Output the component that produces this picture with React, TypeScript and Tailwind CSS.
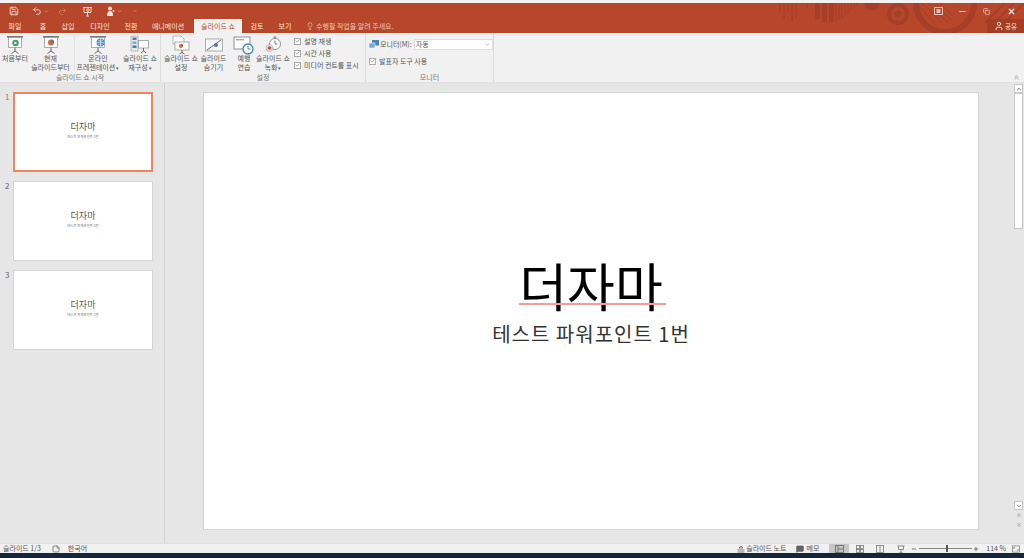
import React from "react";
import { Save, Undo2, Redo2, Lightbulb, User, Minus, X, Copy, Check, ChevronUp, ChevronDown, ChevronsUp, ChevronsDown, StickyNote, MessageSquare, Plus } from "lucide-react";

const font = { fontFamily: '"Noto Sans CJK KR", "Noto Sans", sans-serif' };

function Board({ children }: { children?: React.ReactNode }) {
  return (
    <svg width="20" height="20" viewBox="0 0 20 20" fill="none">
      <rect x="2" y="1" width="16" height="1.6" fill="#7a7a7a" />
      <rect x="3.5" y="2.6" width="13" height="10" fill="#fff" stroke="#8c8c8c" strokeWidth="0.7" />
      <path d="M10 12.6v3.4M6.5 18.5l3.5-2.5 3.5 2.5" stroke="#666" strokeWidth="1" />
      {children}
    </svg>
  );
}

const IconStart = () => (
  <Board>
    <circle cx="10.5" cy="8" r="3.2" fill="#3f9e6a" />
    <path d="M9.5 6.4l2.6 1.6-2.6 1.6z" fill="#fff" />
  </Board>
);
const IconCurrent = () => (
  <Board>
    <circle cx="10" cy="7.5" r="3" fill="#d9663c" />
    <path d="M10 7.5V4.5a3 3 0 0 1 3 3z" fill="#3c78b5" />
  </Board>
);
const IconOnline = () => (
  <Board>
    <circle cx="12.5" cy="7.5" r="4" fill="#4b8fd1" />
    <path d="M8.5 7.5h8M12.5 3.5v8M10 4.8c1.5 1.4 3.5 1.4 5 0M10 10.2c1.5-1.4 3.5-1.4 5 0" stroke="#fff" strokeWidth="0.5" />
  </Board>
);
const IconCustom = () => (
  <svg width="20" height="20" viewBox="0 0 20 20" fill="none">
    <rect x="1" y="1" width="7" height="15" fill="#e8e8e8" stroke="#999" strokeWidth="0.6" />
    <rect x="2.5" y="2.5" width="4" height="2.4" fill="#3c78b5" />
    <rect x="2.5" y="6.5" width="4" height="2.4" fill="#7aa7d2" />
    <rect x="2.5" y="10.5" width="4" height="2.4" fill="#3c78b5" />
    <rect x="8.5" y="5.5" width="10" height="7.5" fill="#fff" stroke="#8c8c8c" strokeWidth="0.7" />
    <path d="M13.5 13v3M11 18l2.5-2 2.5 2" stroke="#666" />
  </svg>
);
const IconSetup = () => (
  <svg width="20" height="20" viewBox="0 0 20 20" fill="none">
    <path d="M2 1h8l3 3v5H2z" fill="#fff" stroke="#999" strokeWidth="0.7" />
    <rect x="4" y="7" width="14" height="8" fill="#fff" stroke="#8c8c8c" strokeWidth="0.7" />
    <circle cx="10" cy="11" r="2" fill="#d9663c" />
    <path d="M10 11V9a2 2 0 0 1 2 2z" fill="#3c78b5" />
    <path d="M11 15v3M8.5 19l2.5-1.5 2.5 1.5" stroke="#666" />
  </svg>
);
const IconHide = () => (
  <svg width="20" height="20" viewBox="0 0 20 20" fill="none">
    <rect x="1.5" y="4" width="17" height="12" fill="#f8f8f8" stroke="#8c8c8c" strokeWidth="0.7" />
    <path d="M3 15L17 5" stroke="#555" strokeWidth="0.9" />
    <circle cx="12" cy="10" r="2" fill="#3c78b5" />
    <path d="M10 10h2v2a2 2 0 0 1-2-2z" fill="#d9663c" />
  </svg>
);
const IconRehearse = () => (
  <svg width="22" height="22" viewBox="0 0 22 22" fill="none">
    <rect x="1" y="3" width="16" height="12" fill="#fff" stroke="#777" strokeWidth="0.8" />
    <rect x="3" y="5" width="8" height="1.4" fill="#aaa" />
    <circle cx="15" cy="15" r="5" fill="#fff" stroke="#3c86c6" strokeWidth="1.3" />
    <path d="M15 12v3h2.4" stroke="#3c86c6" strokeWidth="1" />
  </svg>
);
const IconRecord = () => (
  <svg width="20" height="20" viewBox="0 0 20 20" fill="none">
    <circle cx="12" cy="9" r="5.5" fill="#fff" stroke="#777" strokeWidth="0.8" />
    <path d="M12 5.5V9h2.6M10.5 2h3M12 2v1.5" stroke="#666" strokeWidth="0.8" />
    <circle cx="6.5" cy="13" r="3.5" fill="#e2e2e2" stroke="#999" strokeWidth="0.5" />
    <circle cx="6.5" cy="13" r="1.8" fill="#d9483c" />
  </svg>
);

function RibbonBtn({ icon, lines, width, arrow }: { icon: React.ReactNode; lines: string[]; width: string; arrow?: boolean }) {
  return (
    <div className={`flex flex-col items-center shrink-0 ${width}`}>
      <div className="h-[19px] flex items-center justify-center">{icon}</div>
      <div className="text-[7px] leading-[9px] text-[#555] text-center whitespace-nowrap">
        {lines.map((l, i) => (
          <div key={l}>
            {l}
            {arrow && i === lines.length - 1 && <span className="text-[5px]"> ▾</span>}
          </div>
        ))}
      </div>
    </div>
  );
}

function Check1({ label }: { label: string }) {
  return (
    <div className="flex items-center gap-[3px] h-[12.5px]">
      <span className="w-[7px] h-[7px] border border-[#aaa] bg-white flex items-center justify-center">
        <Check size={6} strokeWidth={3} className="text-[#666]" />
      </span>
      <span className="text-[7px] leading-none text-[#555] whitespace-nowrap">{label}</span>
    </div>
  );
}

function Group({ width, label, children }: { width: string; label: string; children: React.ReactNode }) {
  return (
    <div className={`flex flex-col shrink-0 border-r border-[#dcdcdc] h-full ${width}`}>
      <div className="flex-1 flex min-h-0 pt-[2px]">{children}</div>
      <div className="h-[11px] text-[7px] leading-[13px] text-[#777] text-center">{label}</div>
    </div>
  );
}

function Thumb({ n, active }: { n: number; active?: boolean }) {
  return (
    <div className="flex h-[80px] mb-[9px]">
      <div className={`w-[13px] pl-[5px] text-[8px] leading-[10px] ${active ? "text-[#d9663c]" : "text-[#666]"}`}>{n}</div>
      <div className={`w-[140px] h-full bg-white flex flex-col items-center justify-center pb-[4px] ${active ? "border-2 border-[#f0845f]" : "border border-[#d4d4d4]"}`}>
        <div className="text-[9px] leading-[12px] text-[#555]">더자마</div>
        <div className="text-[3.4px] leading-[5px] mt-[0.5px] text-[#777] whitespace-nowrap">테스트 파워포인트 1번</div>
      </div>
    </div>
  );
}

const tabs: [string, string][] = [
  ["파일", "w-[30px]"],
  ["홈", "w-[26px]"],
  ["삽입", "w-[24px]"],
  ["디자인", "w-[40px]"],
  ["전환", "w-[22px]"],
  ["애니메이션", "w-[52px]"],
];

export default function App() {
  return (
    <div style={font} className="w-[1024px] h-[558px] overflow-hidden flex flex-col bg-[#e6e6e6]">
      <div className="h-[3px] bg-[#f2f2f2] shrink-0" />
      {/* Title + tabs */}
      <div className="relative h-[30px] bg-[#b7472a] shrink-0 flex flex-col overflow-hidden">
        <svg className="absolute left-[770px] top-0" width="254" height="30" viewBox="0 0 254 30" fill="none">
          <g stroke="#a63f27" strokeWidth="1.2">
            <path d="M10 0v10M14 0v16M18 0v9M22 0v18M26 0v14M37 0v5" />
          </g>
          <g fill="#a63f27">
            <rect x="45" y="0" width="5" height="16" />
            <rect x="52" y="0" width="5" height="19" />
            <rect x="59" y="0" width="5" height="19" />
          </g>
          <g stroke="#a63f27" strokeWidth="1">
            <path d="M66 0v19M69 0v17M72 0v15M75 0v13M78 0v11M81 0v8M84 0v5M87 0v3" />
          </g>
          <circle cx="102" cy="0" r="7.5" fill="#a63f27" />
          <circle cx="128" cy="11" r="11" fill="#a63f27" />
          <circle cx="128" cy="11" r="7" fill="#b7472a" />
          <circle cx="128" cy="11" r="3.5" fill="#a63f27" />
          <circle cx="175" cy="0" r="29" stroke="#a63f27" strokeWidth="6" />
          <g stroke="#a63f27" strokeWidth="1">
            <path d="M152 0l20 20M158 0l20 20M164 0l17 17M170 0l14 14M146 0l20 22" />
          </g>
          <g stroke="#a63f27" strokeWidth="2">
            <path d="M215 20L235 0M222 22L244 0M232 22L254 0" />
          </g>
        </svg>
        <div className="relative h-[16px] flex items-center text-[#f4e4df]">
          <Save size={10} className="ml-[9px]" />
          <Undo2 size={10} className="ml-[13px]" />
          <ChevronDown size={5} className="ml-[1.5px]" />
          <Redo2 size={9} className="ml-[9px] opacity-40" />
          <svg className="ml-[15px]" width="11" height="11" viewBox="0 0 11 11" fill="none" stroke="currentColor" strokeWidth="0.9">
            <path d="M1 1.5h9M2 1.5v5h7v-5M5.5 6.5V10M4 10h3" />
            <circle cx="6" cy="4" r="1.3" />
          </svg>
          <svg className="ml-[13.5px]" width="10" height="11" viewBox="0 0 10 11" fill="currentColor">
            <circle cx="4" cy="2.5" r="2" />
            <path d="M1 10c0-4 1.5-5 3-5s3 1 3 5z" />
            <circle cx="7.5" cy="5" r="1" />
          </svg>
          <ChevronDown size={5} className="ml-[1px]" />
          <Minus size={4} className="ml-[11px]" />
          <div className="ml-auto flex items-center">
            <svg width="9" height="8" viewBox="0 0 9 8" fill="none" stroke="currentColor" className="mr-[15px] opacity-80">
              <rect x="0.5" y="0.5" width="8" height="7" />
              <rect x="3" y="2.5" width="3" height="3" fill="currentColor" />
            </svg>
            <Minus size={9} strokeWidth={3} className="mr-[16px]" />
            <Copy size={7} strokeWidth={2} className="mr-[17px]" />
            <X size={9} strokeWidth={3.5} className="mr-[8px]" />
          </div>
        </div>
        <div className="relative h-[14px] flex items-stretch text-[7px] leading-[14px] text-[#f6e3dd]">
          {tabs.map(([t, w]) => (
            <div key={t} className={`text-center ${w}`}>{t}</div>
          ))}
          <div className="w-[48px] bg-[#f1f1f1] text-[#c0492b] text-center">슬라이드 쇼</div>
          <div className="w-[30px] text-center">검토</div>
          <div className="w-[26px] text-center">보기</div>
          <Lightbulb size={8} className="ml-[8px] mt-[3px] text-[#eec4b6]" />
          <div className="ml-[2px] text-[#eec4b6] whitespace-nowrap">수행할 작업을 알려 주세요.</div>
          <div className="ml-auto w-[37px] bg-[#a33e24] flex items-center justify-center gap-[1px]">
            <User size={10} />
            <span className="text-[6.5px]">공유</span>
          </div>
        </div>
      </div>
      {/* Ribbon */}
      <div className="relative h-[50px] bg-[#f1f1f1] shrink-0 flex border-b border-[#e2e2e2]">
        <Group width="w-[161px]" label="슬라이드 쇼 시작">
          <RibbonBtn width="w-[30px]" icon={<IconStart />} lines={["처음부터"]} />
          <RibbonBtn width="w-[41px]" icon={<IconCurrent />} lines={["현재", "슬라이드부터"]} />
          <div className="w-[1px] bg-[#e2e2e2] h-[36px] shrink-0 ml-[3px]" />
          <RibbonBtn width="w-[46px]" icon={<IconOnline />} lines={["온라인", "프레젠테이션"]} arrow />
          <RibbonBtn width="w-[38px]" icon={<IconCustom />} lines={["슬라이드 쇼", "재구성"]} arrow />
        </Group>
        <Group width="w-[205px]" label="설정">
          <RibbonBtn width="w-[36px] ml-[2px]" icon={<IconSetup />} lines={["슬라이드 쇼", "설정"]} />
          <RibbonBtn width="w-[29px]" icon={<IconHide />} lines={["슬라이드", "숨기기"]} />
          <RibbonBtn width="w-[32px]" icon={<IconRehearse />} lines={["예행", "연습"]} />
          <RibbonBtn width="w-[26px]" icon={<IconRecord />} lines={["슬라이드 쇼", "녹화"]} arrow />
          <div className="ml-[8px] flex flex-col">
            <Check1 label="설명 재생" />
            <Check1 label="시간 사용" />
            <Check1 label="미디어 컨트롤 표시" />
          </div>
        </Group>
        <Group width="w-[128px]" label="모니터">
          <div className="flex flex-col pl-[3px] pt-[3px]">
            <div className="flex items-center h-[13px]">
              <svg width="10" height="9" viewBox="0 0 10 9" className="mr-[1px]">
                <rect x="3" y="0" width="7" height="5.5" fill="#4b80b8" />
                <rect x="0" y="3" width="6" height="5" fill="#7aa7d2" stroke="#fff" strokeWidth="0.5" />
              </svg>
              <span className="text-[7px] leading-none text-[#555] whitespace-nowrap">모니터(M):</span>
              <div className="ml-[2px] w-[79px] h-[11px] bg-white border border-[#dcdcdc] flex items-center justify-between pl-[1px] pr-[2px] text-[7px] leading-none text-[#555]">
                자동
                <ChevronDown size={5} />
              </div>
            </div>
            <div className="mt-[4px] h-[12px]">
              <Check1 label="발표자 도구 사용" />
            </div>
          </div>
        </Group>
        <ChevronsUp size={7} className="absolute right-[4px] bottom-[1px] text-[#777]" />
      </div>
      {/* Content */}
      <div className="flex-1 min-h-0 flex">
        <div className="w-[165px] shrink-0 border-r border-[#d2d2d2] pt-[9px]">
          <Thumb n={1} active />
          <Thumb n={2} />
          <Thumb n={3} />
        </div>
        <div className="flex-1 flex pt-[9px] pl-[38px]">
          <div className="relative w-[776px] h-[438px] bg-white border border-[#d4d4d4] flex flex-col items-center pt-[160px]">
            <div className="relative text-[52px] leading-[64px] text-black">
              더자마
              <div className="absolute left-0 right-[-3px] top-[50px] h-[2px] bg-[#f79a9a]" />
            </div>
            <div className="text-[20px] leading-[28px] mt-[3px] text-[#333] tracking-[1px]">테스트 파워포인트 1번</div>
          </div>
        </div>
        <div className="w-[9px] shrink-0 mr-[1px] flex flex-col items-stretch">
          <div className="h-[9px] bg-white border border-[#c8c8c8] flex items-center justify-center mt-[1px]">
            <ChevronUp size={6} strokeWidth={3} className="text-[#555]" />
          </div>
          <div className="h-[136px] bg-white border border-[#c8c8c8]" />
          <div className="flex-1" />
          <div className="h-[9px] bg-white border border-[#c8c8c8] flex items-center justify-center">
            <ChevronDown size={6} strokeWidth={3} className="text-[#555]" />
          </div>
          <div className="h-[10px] flex items-center justify-center text-[#666]"><ChevronsUp size={6} /></div>
          <div className="h-[10px] mb-[13px] flex items-center justify-center text-[#666]"><ChevronsDown size={6} /></div>
        </div>
      </div>
      {/* Status */}
      <div className="h-[10px] shrink-0 bg-[#f1f1f1] border-t border-[#e0e0e0] flex items-center text-[7px] leading-none text-[#555]">
        <span className="ml-[3px]">슬라이드 1/3</span>
        <StickyNote size={8} className="ml-[11px]" />
        <span className="ml-[8px]">한국어</span>
        <div className="ml-auto flex items-center h-full">
          <svg width="8" height="8" viewBox="0 0 8 8" stroke="#666" fill="none" strokeWidth="0.8" className="mr-[1px]">
            <path d="M4 1L2 3h4zM0.5 5h7M0.5 7h7" />
          </svg>
          <span>슬라이드 노트</span>
          <MessageSquare size={8} className="ml-[10px] mr-[2px] fill-[#666]" />
          <span>메모</span>
          <div className="ml-[10px] w-[20px] h-full bg-[#c6c6c6] flex items-center justify-center">
            <svg width="9" height="8" viewBox="0 0 9 8" fill="none" stroke="#666" strokeWidth="0.8"><rect x="0.5" y="0.5" width="8" height="7" /><path d="M3 0.5v7M3 4h5" /></svg>
          </div>
          <svg width="8" height="8" viewBox="0 0 8 8" fill="none" stroke="#777" strokeWidth="0.8" className="ml-[7px]"><rect x="0.5" y="0.5" width="3" height="3" /><rect x="4.5" y="0.5" width="3" height="3" /><rect x="0.5" y="4.5" width="3" height="3" /><rect x="4.5" y="4.5" width="3" height="3" /></svg>
          <svg width="8" height="8" viewBox="0 0 8 8" fill="none" stroke="#777" strokeWidth="0.8" className="ml-[12px]"><rect x="0.5" y="0.5" width="7" height="7" /><path d="M4 0.5v7" /></svg>
          <svg width="8" height="8" viewBox="0 0 8 8" fill="none" stroke="#777" strokeWidth="0.8" className="ml-[13px]"><path d="M0.5 1h7M1.5 1v3.5h5V1M4 4.5V7M2.5 7.5h3" /></svg>
          <Minus size={6} strokeWidth={3} className="ml-[6px]" />
          <div className="relative w-[53px] h-[1px] bg-[#888] ml-[2px]">
            <div className="absolute left-[27px] top-[-3px] w-[2px] h-[7px] bg-[#555]" />
          </div>
          <Plus size={6} strokeWidth={3} className="ml-[1px]" />
          <span className="ml-[7px]">114 %</span>
          <svg width="8" height="8" viewBox="0 0 9 8" fill="none" stroke="#777" strokeWidth="0.8" className="ml-[6px] mr-[4px]"><rect x="0.5" y="0.5" width="8" height="7" /><path d="M2 2.5h1.5M2 2.5V4M7 5.5H5.5M7 5.5V4" /></svg>
        </div>
      </div>
      <div className="h-[5px] shrink-0 bg-[#14263a]" />
    </div>
  );
}
